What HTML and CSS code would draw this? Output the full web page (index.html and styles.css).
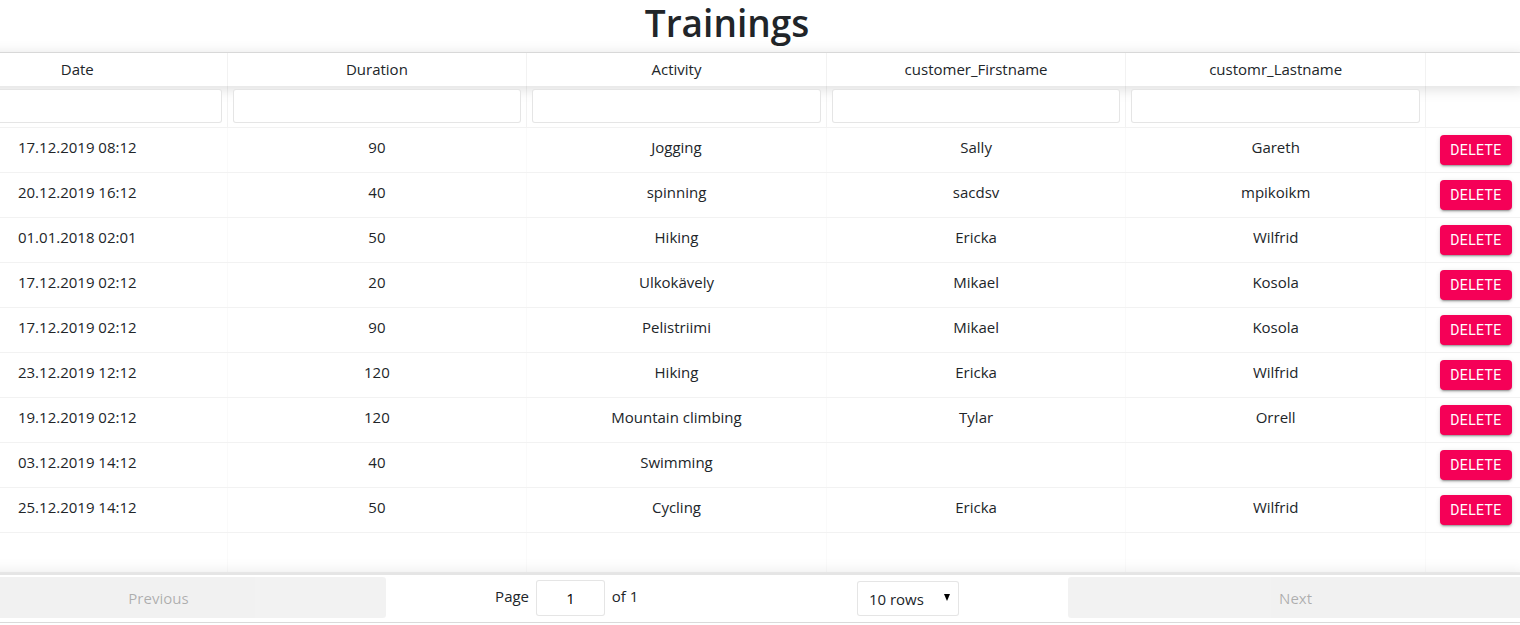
FILE: index.html
```html
<!DOCTYPE html>
<html lang="en">
<head>
<meta charset="utf-8">
<title>Trainings</title>
<link rel="stylesheet" href="styles.css">
</head>
<body>
<div class="page">
  <h1 class="title">Trainings</h1>
  <div class="react-table">
    <div class="thead header">
      <div class="tr">
        <div class="th">Date</div>
        <div class="th">Duration</div>
        <div class="th">Activity</div>
        <div class="th">customer_Firstname</div>
        <div class="th">customr_Lastname</div>
        <div class="th last"></div>
      </div>
    </div>
    <div class="thead filters">
      <div class="tr">
        <div class="fh"><input class="filter-input" type="text"></div>
        <div class="fh"><input class="filter-input" type="text"></div>
        <div class="fh"><input class="filter-input" type="text"></div>
        <div class="fh"><input class="filter-input" type="text"></div>
        <div class="fh"><input class="filter-input" type="text"></div>
        <div class="fh last"></div>
      </div>
    </div>
    <div class="tbody">
      <div class="tr row"><div class="td">17.12.2019 08:12</div><div class="td">90</div><div class="td">Jogging</div><div class="td">Sally</div><div class="td">Gareth</div><div class="td last"><button class="btn-delete">Delete</button></div></div>
      <div class="tr row"><div class="td">20.12.2019 16:12</div><div class="td">40</div><div class="td">spinning</div><div class="td">sacdsv</div><div class="td">mpikoikm</div><div class="td last"><button class="btn-delete">Delete</button></div></div>
      <div class="tr row"><div class="td">01.01.2018 02:01</div><div class="td">50</div><div class="td">Hiking</div><div class="td">Ericka</div><div class="td">Wilfrid</div><div class="td last"><button class="btn-delete">Delete</button></div></div>
      <div class="tr row"><div class="td">17.12.2019 02:12</div><div class="td">20</div><div class="td">Ulkokävely</div><div class="td">Mikael</div><div class="td">Kosola</div><div class="td last"><button class="btn-delete">Delete</button></div></div>
      <div class="tr row"><div class="td">17.12.2019 02:12</div><div class="td">90</div><div class="td">Pelistriimi</div><div class="td">Mikael</div><div class="td">Kosola</div><div class="td last"><button class="btn-delete">Delete</button></div></div>
      <div class="tr row"><div class="td">23.12.2019 12:12</div><div class="td">120</div><div class="td">Hiking</div><div class="td">Ericka</div><div class="td">Wilfrid</div><div class="td last"><button class="btn-delete">Delete</button></div></div>
      <div class="tr row"><div class="td">19.12.2019 02:12</div><div class="td">120</div><div class="td">Mountain climbing</div><div class="td">Tylar</div><div class="td">Orrell</div><div class="td last"><button class="btn-delete">Delete</button></div></div>
      <div class="tr row"><div class="td">03.12.2019 14:12</div><div class="td">40</div><div class="td">Swimming</div><div class="td"></div><div class="td"></div><div class="td last"><button class="btn-delete">Delete</button></div></div>
      <div class="tr row"><div class="td">25.12.2019 14:12</div><div class="td">50</div><div class="td">Cycling</div><div class="td">Ericka</div><div class="td">Wilfrid</div><div class="td last"><button class="btn-delete">Delete</button></div></div>
      <div class="tr row pad"><div class="td">&nbsp;</div><div class="td">&nbsp;</div><div class="td">&nbsp;</div><div class="td">&nbsp;</div><div class="td">&nbsp;</div><div class="td last">&nbsp;</div></div>
    </div>
    <div class="pagination">
      <div class="pg-prev"><button class="pg-btn" disabled>Previous</button></div>
      <div class="pg-center">
        <span class="page-info">Page <input class="page-jump" type="text" value="1"> of 1</span>
        <span class="page-size"><span class="select-wrap"><select class="size-select"><option>10 rows</option></select></span></span>
      </div>
      <div class="pg-next"><button class="pg-btn" disabled>Next</button></div>
    </div>
  </div>
</div>
</body>
</html>
```

FILE: styles.css
```css
html, body {
  margin: 0;
  padding: 0;
  background: #fff;
}
body {
  overflow: hidden;
  font-family: "Segoe UI", "Open Sans", "Noto Sans", sans-serif;
  font-size: 15px;
  line-height: 24px;
  color: #212529;
}
.page {
  width: 1600px;
  margin-left: -73px;
}
.title {
  margin: 0 0 6px;
  font-size: 37px;
  line-height: 46px;
  font-weight: 600;
  text-align: center;
  color: #212529;
}
.react-table {
  border: 1px solid rgba(0, 0, 0, 0.1);
  display: flex;
  flex-direction: column;
}
.tr {
  display: flex;
}
.th, .fh, .td {
  flex: 0 0 299.6px;
  box-sizing: border-box;
  text-align: center;
}
.th.last, .fh.last, .td.last {
  flex: 1 1 auto;
}
.header {
  box-shadow: 0 2px 15px 0 rgba(0, 0, 0, 0.15);
}
.th {
  padding: 5px 5px;
  height: 33px;
  line-height: 22px;
  border-right: 1px solid rgba(0, 0, 0, 0.05);
}
.th.last { border-right: 0; }
.filters {
  border-bottom: 1px solid rgba(0, 0, 0, 0.05);
}
.fh {
  padding: 3px 5px 4px;
  height: 41px;
  border-right: 1px solid rgba(0, 0, 0, 0.05);
}
.fh.last { border-right: 0; }
.filter-input {
  display: block;
  box-sizing: border-box;
  width: 100%;
  height: 34px;
  margin: 0;
  border: 1px solid rgba(0, 0, 0, 0.1);
  border-radius: 3px;
  background: #fff;
  padding: 5px 7px;
  font: inherit;
  outline: none;
}
.row {
  border-bottom: 1px solid rgba(0, 0, 0, 0.05);
}
.td {
  padding: 7px 5px;
  border-right: 1px solid rgba(0, 0, 0, 0.02);
  min-height: 44px;
}
.td.last { border-right: 0; }
.pad .td {
  min-height: 39px;
  height: 39px;
}
.btn-delete {
  display: inline-block;
  box-sizing: border-box;
  height: 30px;
  min-width: 72px;
  padding: 4px 10px;
  margin: 0;
  border: 0;
  border-radius: 4px;
  background: #f50057;
  color: #fff;
  font-family: Roboto, "Noto Sans", sans-serif;
  font-size: 14px;
  font-weight: 400;
  line-height: 22px;
  letter-spacing: 0.4px;
  text-transform: uppercase;
  vertical-align: top;
  box-shadow: 0 3px 1px -2px rgba(0, 0, 0, 0.2), 0 2px 2px 0 rgba(0, 0, 0, 0.14), 0 1px 5px 0 rgba(0, 0, 0, 0.12);
}
.pagination {
  display: flex;
  justify-content: space-between;
  align-items: stretch;
  padding: 2px 3px 3px;
  border-top: 2px solid rgba(0, 0, 0, 0.1);
  box-shadow: 0 0 15px 0 rgba(0, 0, 0, 0.1);
}
.pg-prev, .pg-next {
  flex: 1;
  text-align: center;
}
.pg-center {
  flex: 1.5;
  display: flex;
  justify-content: space-around;
  align-items: center;
  text-align: center;
}
.pg-btn {
  display: block;
  width: 100%;
  height: 41px;
  border: 0;
  border-radius: 3px;
  padding: 6px;
  font: inherit;
  font-size: 15px;
  background: rgba(0, 0, 0, 0.1);
  color: rgba(0, 0, 0, 0.6);
  opacity: 0.5;
}
.page-info {
  margin: 3px 10px;
  white-space: nowrap;
}
.page-jump {
  box-sizing: border-box;
  width: 69px;
  height: 36px;
  margin: 0 3px;
  padding: 5px 7px;
  border: 1px solid rgba(0, 0, 0, 0.1);
  border-radius: 3px;
  background: #fff;
  font: inherit;
  text-align: center;
  outline: none;
  vertical-align: middle;
}
.page-size {
  margin: 3px 10px;
}
.select-wrap {
  position: relative;
  display: inline-block;
  vertical-align: middle;
}
.select-wrap::after {
  content: "";
  position: absolute;
  right: 9px;
  top: 13px;
  border-left: 3.5px solid transparent;
  border-right: 3.5px solid transparent;
  border-top: 7px solid #000;
  pointer-events: none;
}
.size-select {
  -webkit-appearance: none;
  appearance: none;
  display: block;
  box-sizing: border-box;
  width: 102px;
  height: 35px;
  padding: 5px 11px;
  border: 1px solid rgba(0, 0, 0, 0.1);
  border-radius: 3px;
  background: #fff;
  font: inherit;
  color: #212529;
  outline: none;
}
```
